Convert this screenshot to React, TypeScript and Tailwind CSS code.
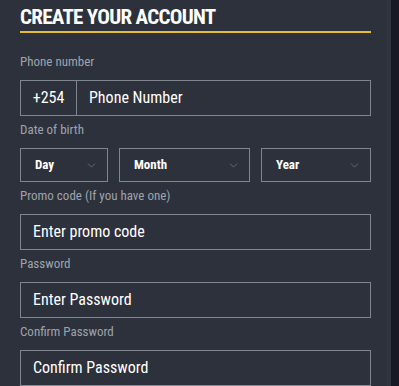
import { ChevronDown } from "lucide-react";

const font = "font-['Roboto_Condensed','Liberation_Sans_Narrow',Roboto,sans-serif]";

function Label({ children }: { children: React.ReactNode }) {
  return <div className="text-[13px] leading-[14px] text-[#9ea3ad]">{children}</div>;
}

function Field({ placeholder }: { placeholder: string }) {
  return (
    <div className="h-[36px] border border-[#80858f] flex items-center px-[12px] text-[16px] text-white">
      {placeholder}
    </div>
  );
}

function Select({ label, className }: { label: string; className: string }) {
  return (
    <div
      className={`h-[34px] border border-[#80858f] flex items-center justify-between pl-[14px] pr-[9px] text-[13px] font-bold text-white ${className}`}
    >
      <span>{label}</span>
      <ChevronDown className="w-[13px] h-[13px] text-[#7c818b]" strokeWidth={1.25} />
    </div>
  );
}

export default function App() {
  return (
    <div className={`flex h-[386px] w-[399px] overflow-hidden ${font}`}>
      <div className="w-[386px] bg-[#2d313c] pl-[20px] pr-[15px]">
        <div className="pt-[4px] text-[21px] leading-[26px] font-bold text-white tracking-[-0.7px]">
          CREATE YOUR ACCOUNT
        </div>
        <div className="mt-[1px] h-[2px] bg-[#e2bf26]" />
        <div className="mt-[22px]">
          <Label>Phone number</Label>
        </div>
        <div className="mt-[11px] h-[36px] border border-[#80858f] flex items-center text-[16px] text-white">
          <div className="w-[56px] h-full border-r border-[#80858f] flex items-center justify-center">+254</div>
          <div className="pl-[12px]">Phone Number</div>
        </div>
        <div className="mt-[7px]">
          <Label>Date of birth</Label>
        </div>
        <div className="mt-[11px] flex gap-[11px]">
          <Select label="Day" className="w-[88px]" />
          <Select label="Month" className="w-[131px]" />
          <Select label="Year" className="flex-1" />
        </div>
        <div className="mt-[7px]">
          <Label>Promo code (If you have one)</Label>
        </div>
        <div className="mt-[11px]">
          <Field placeholder="Enter promo code" />
        </div>
        <div className="mt-[7px]">
          <Label>Password</Label>
        </div>
        <div className="mt-[11px]">
          <Field placeholder="Enter Password" />
        </div>
        <div className="mt-[7px]">
          <Label>Confirm Password</Label>
        </div>
        <div className="mt-[11px]">
          <Field placeholder="Confirm Password" />
        </div>
      </div>
      <div className="w-[5px] bg-[#30343f]" />
      <div className="flex-1 bg-[#171a24]" />
    </div>
  );
}
